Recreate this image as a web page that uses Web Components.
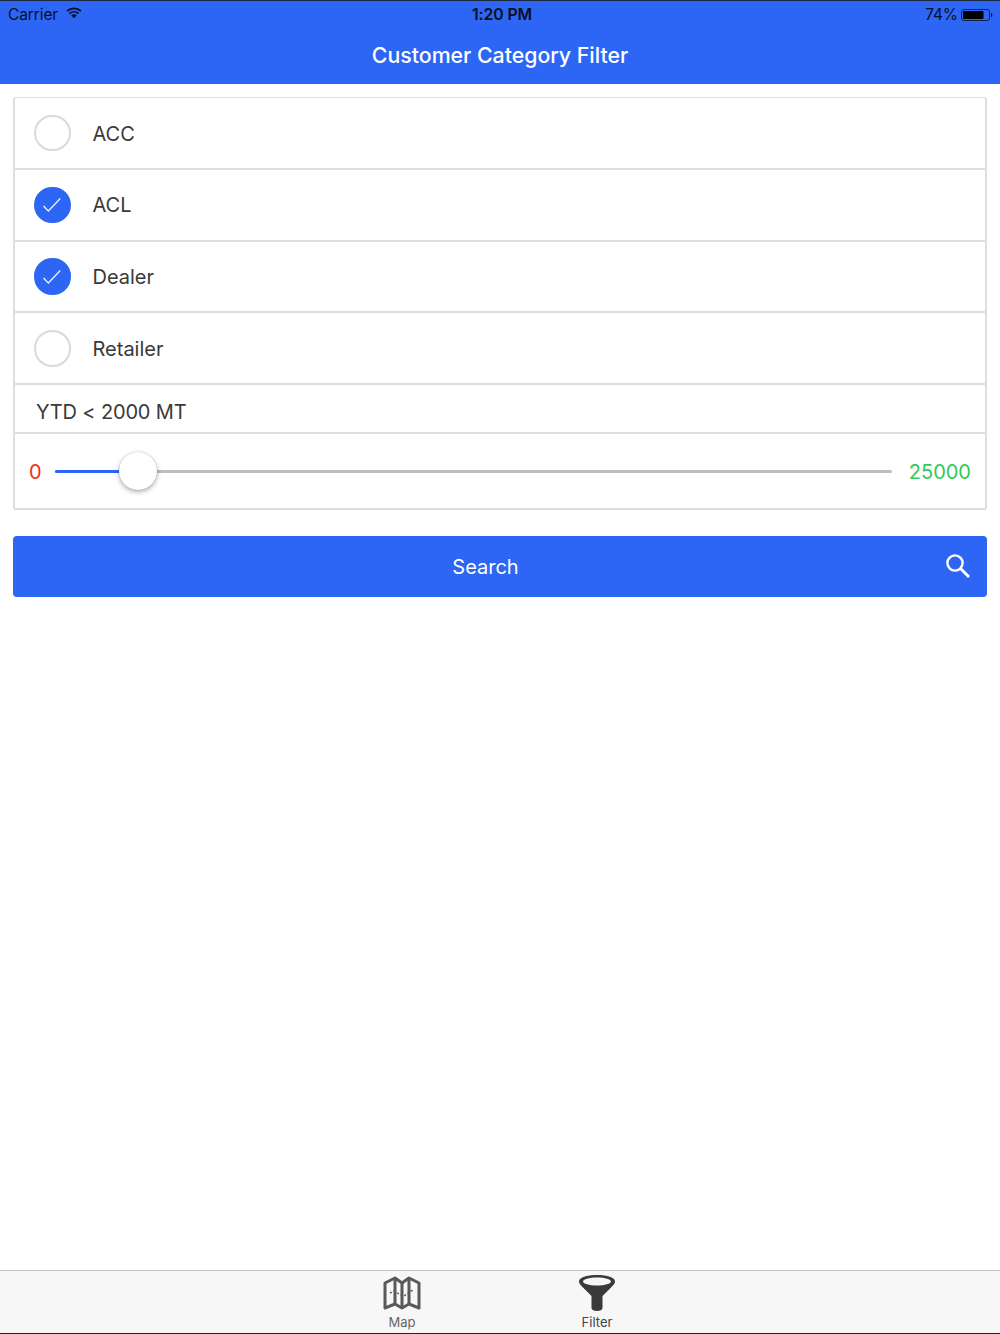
<!DOCTYPE html>
<html><head><meta charset="utf-8"><title>Customer Category Filter</title>
<style>
html,body{margin:0;padding:0;background:#fff}
body{width:1000px;height:1334px;font-family:Inter,"Liberation Sans",sans-serif;overflow:hidden}
app-shell{height:1334px}
</style></head><body>
<app-shell>
  <app-header slot="header" title-text="Customer Category Filter"></app-header>
  <filter-card>
    <check-row>ACC</check-row>
    <check-row checked>ACL</check-row>
    <check-row checked>Dealer</check-row>
    <check-row>Retailer</check-row>
    <ytd-label>YTD &lt; 2000 MT</ytd-label>
    <range-row min="0" max="25000"></range-row>
  </filter-card>
  <search-button>Search</search-button>
  <tab-bar slot="tabs"></tab-bar>
</app-shell>
<script>
function def(name, html, init){
  customElements.define(name, class extends HTMLElement{
    constructor(){super();this.attachShadow({mode:'open'}).innerHTML=html;}
    connectedCallback(){ if(init) init(this); }
  });
}
def('app-shell',`<style>
:host{display:flex;flex-direction:column;width:1000px;height:1334px;font-family:Inter,"Liberation Sans",sans-serif}
main{flex:1;display:flex;flex-direction:column;padding:13px 13px 0;gap:26px}
</style><slot name="header"></slot><main><slot></slot></main><slot name="tabs"></slot>`);

def('app-header',`<style>
:host{display:block;background:#2d66f5;height:84px;box-sizing:border-box;border-top:1px solid #1c2740;color:#fff}
.status{height:27px;display:flex;align-items:center;justify-content:space-between;padding:0 7px 0 8px;color:#0a0f20;font-size:15.5px;position:relative;letter-spacing:-.1px}
.l,.r{display:flex;align-items:center}
.l svg{margin-left:8px;margin-top:-3px}
.time{position:absolute;left:0;right:0;text-align:center;font-weight:600;font-size:15.8px;padding-left:4px}
.r svg{margin-left:3px}
h1{margin:0;font-weight:500;font-size:21.3px;text-align:center;line-height:28px;padding-top:13px}
</style>
<div class="status"><span class="l">Carrier
<svg width="16" height="12" viewBox="0 0 16 12"><path d="M1 4.2C5 .3 11 .3 15 4.2" fill="none" stroke="#0a0f20" stroke-width="1.7"/><path d="M3.4 6.6c2.7-2.5 6.5-2.5 9.2 0" fill="none" stroke="#0a0f20" stroke-width="1.7"/><path d="M5.2 8.2c1.7-1.4 3.900-1.400 5.600 0L8 11.200z" fill="#0a0f20"/></svg></span>
<span class="time">1:20 PM</span>
<span class="r">74%
<svg width="32" height="14" viewBox="0 0 32 14"><rect x=".5" y="1.5" width="28" height="11" rx="2.5" fill="none" stroke="#10224f"/><rect x="2" y="3" width="20.5" height="8" rx="1" fill="#000"/><path d="M30 5v4c.8 0 1.3-.8 1.3-2S30.800 5 30 5z" fill="#0a0f20"/></svg></span></div>
<h1></h1>`, el=>{el.shadowRoot.querySelector('h1').textContent=el.getAttribute('title-text')});

def('filter-card',`<style>
:host{display:block;border:2px solid #dedede;border-width:1.5px 2px 2px 2px;border-radius:3px;background:#fff}
</style><slot></slot>`);

def('check-row',`<style>
:host{display:flex;align-items:center;box-sizing:border-box;height:71.75px;padding:1.5px 0 0 19px;border-bottom:2px solid #dedede;font-size:20px;color:#3a3a3a}
.c{width:32.5px;height:32.5px;border:2px solid #dadada;border-radius:50%;box-sizing:content-box;display:flex;align-items:center;justify-content:center;margin-right:22px;flex:none;position:relative;top:-.5px}
:host([checked]) .c{background:#2d66f5;border-color:#2d66f5}
svg{display:none}
:host([checked]) svg{display:block}
</style><span class="c"><svg width="20" height="16" viewBox="0 0 20 16"><path d="M1.500 9l4.800 5L18.300 1.500" fill="none" stroke="#e8eefc" stroke-width="1.400"/></svg></span><slot></slot>`);

def('ytd-label',`<style>
:host{display:flex;align-items:center;box-sizing:border-box;height:49px;padding:7px 0 0 21px;border-bottom:2px solid #dedede;font-size:20px;letter-spacing:-.15px;color:#3a3a3a}
</style><slot></slot>`);

def('range-row',`<style>
:host{display:flex;align-items:center;box-sizing:border-box;height:74px;padding:1px 14px 0 14px;font-size:20px}
.a{color:#f02c24;width:26px;flex:none}
.b{color:#2ecb58;flex:none;margin-left:17px}
.t{flex:1;height:3px;background:#bdbdbd;position:relative;border-radius:2px}
.f{height:3px;width:70px;background:#2d66f5;border-radius:2px}
.k{position:absolute;left:64px;top:-18px;width:38px;height:38px;border-radius:50%;background:#fff;box-shadow:0 2px 5px rgba(0,0,0,.32),0 0 1px rgba(0,0,0,.3)}
</style><span class="a"></span><div class="t"><div class="f"></div><div class="k"></div></div><span class="b"></span>`, el=>{
  el.shadowRoot.querySelector('.a').textContent=el.getAttribute('min');
  el.shadowRoot.querySelector('.b').textContent=el.getAttribute('max');
});

def('search-button',`<style>
:host{display:flex;align-items:center;height:61px;background:#2d66f5;border-radius:4px;color:#fff;font-size:20px;padding:0 16px 0 0}
.t{flex:1;text-align:center;padding-left:13px}
svg{display:block;margin-top:-1px}
</style><span class="t"><slot></slot></span><svg width="26" height="26" viewBox="0 0 26 26"><circle cx="10" cy="10" r="7.600" fill="none" stroke="#fff" stroke-width="2.400"/><path d="M15.500 15.500L24 24" stroke="#fff" stroke-width="2.800"/></svg>`);

def('tab-bar',`<style>
:host{display:block;height:64px;box-sizing:border-box;background:#f7f7f7;border-top:1px solid #c4c4c4;border-bottom:1px solid #222;position:relative;font-size:13px;color:#666}
.row{display:flex;height:100%;padding-left:354px}
.i{width:96px;display:flex;flex-direction:column;align-items:center;padding-top:5px;margin-right:99px;box-sizing:border-box}
.i span{line-height:16px;margin-top:4px}
.sel{padding-top:3px}
.sel span{color:#444;margin-top:2px}
</style><div class="row">
<div class="i"><svg width="38" height="34" viewBox="0 0 38 34"><g fill="none" stroke="#595959" stroke-width="3" stroke-linejoin="round"><path d="M2 7 12 2l7 5 7-5 10 5v25l-10-4-7 4-7-4-10 4z"/><path d="M12 2v26M19 7v25M26 2v26"/></g><path d="M7 17l4-2 5 3 5 2 6-4 4-3" fill="none" stroke="#595959" stroke-width="1.500" stroke-dasharray="2 2"/></svg><span>Map</span></div>
<div class="i sel"><svg width="38" height="38" viewBox="0 0 38 38"><path fill-rule="evenodd" fill="#3a3a3a" d="M19 1c10.500 0 18 2.500 18 6.500 0 2-1.500 3.500-3.500 5.500L24.500 22v12c0 2-2.500 3-5.500 3s-5.500-1-5.500-3V22L4.500 13C2.500 11 1 9.500 1 7.500 1 3.500 8.500 1 19 1zm0 2.500C11 3.500 5 5.200 5 7.500s6 4 14 4 14-1.700 14-4-6-4-14-4z"/></svg><span>Filter</span></div>
</div>`);
</script>
</body></html>
